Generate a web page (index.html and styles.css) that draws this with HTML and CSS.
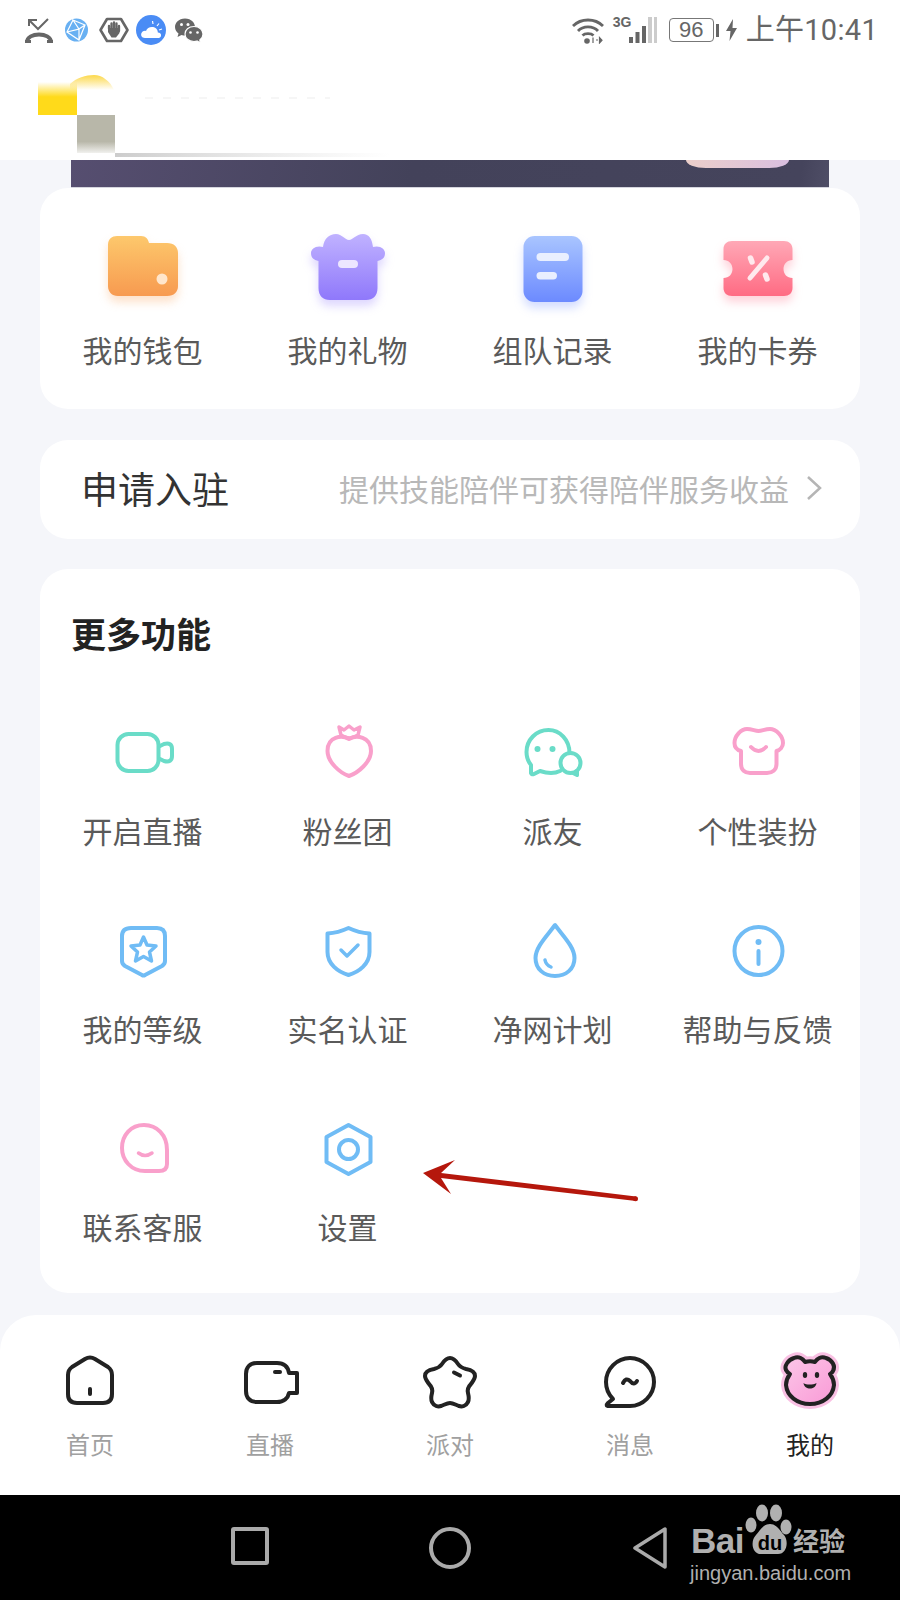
FILE: index.html
```html
<!DOCTYPE html>
<html>
    <head>
        <meta charset="utf-8">
        <meta name="viewport" content="initial-scale=1, maximum-scale=1" />
        <title>我的</title>
        <link rel="stylesheet" href="styles.css">
    </head>
    <body>
        <div class="status">
            <div class="status-left">
                <svg width="30" height="30" viewBox="0 0 30 30"><path d="M5 11V5H13M5 5L14 14L24 4" fill="none" stroke="#666" stroke-width="2"/><path d="M3 27C3 17 27 17 27 27" fill="none" stroke="#666" stroke-width="4"/><path d="M1 25H7V28H1ZM23 25H29V28H23Z" fill="#666"/></svg>
                <svg width="32" height="30" viewBox="0 0 32 30"><circle cx="16.5" cy="15" r="11.5" fill="#68b0f2"/><path d="M13 5L7 17L19 25L25 10L13 5L19 14L7 17M19 14L19 25M19 14L25 10" fill="none" stroke="#fff" stroke-width="1.2"/></svg>
                <svg width="32" height="30" viewBox="0 0 32 30"><path d="M9 4H23L29.500 15L23 26H9L2.500 15Z" fill="none" stroke="#666" stroke-width="2.600" stroke-linejoin="round"/><path d="M11 14V11M13.500 15V8.500M16 15V7.500M18.500 15V8.500M21 16V11" stroke="#666" stroke-width="2.300" stroke-linecap="round"/><path d="M10 13H21.500V18L18 22.500H13.500L10 17Z" fill="#666"/></svg>
                <svg width="30" height="30" viewBox="0 0 30 30"><circle cx="15" cy="15" r="15" fill="#4a8cf5"/><path d="M9 23C5.500 23 4.500 20 5.500 18C6.500 16 8.500 15.500 10 16C11 13 14 11.500 17 12C20 12.500 22 15 21.800 17.500C24 17.500 25.500 19 25 21C24.500 22.500 23.500 23 22 23Z" fill="#fff"/><path d="M17 9L16.500 6M21 11L23 8.500M23 15L26 14" stroke="#fff" stroke-width="1.200"/></svg>
                <svg width="34" height="30" viewBox="0 0 34 30"><path d="M13 3.500C6.500 3.500 3 8 3 12C3 15 4.500 17 6.500 18.500L5.500 22L9.500 20C11 20.500 12 20.500 13 20.500C18 20.500 23 17 23 12C23 8 19.500 3.500 13 3.500Z" fill="#666"/><path d="M22 11.500C16.500 11.500 13 15 13 19C13 23 16.500 26.500 22 26.500C23 26.500 24 26.300 25 26L28.500 28L27.800 25C30 23.500 31 21.500 31 19C31 15 27.500 11.500 22 11.500Z" fill="#666" stroke="#fff" stroke-width="1.200"/><circle cx="9.500" cy="9.500" r="1.500" fill="#fff"/><circle cx="16" cy="9.500" r="1.500" fill="#fff"/><circle cx="18.500" cy="17.500" r="1.300" fill="#fff"/><circle cx="25.500" cy="17.500" r="1.300" fill="#fff"/></svg>
            </div>
            <div class="status-right">
                <svg class="wifi" width="34" height="28" viewBox="0 0 34 28"><path d="M2 10C10 2 24 2 32 10M7 15C12 9.500 22 9.500 27 15M11.500 19.500C14 17 20 17 22.500 19.500" fill="none" stroke="#666" stroke-width="2.800"/><circle cx="16" cy="25" r="2.800" fill="#666"/><path d="M22 21.500V27M25 24H27M28.500 21.500V27L31 24.200Z" stroke="#666" stroke-width="1.200" fill="#666"/></svg>
                <div class="signal">
                    <span class="net">3G</span>
                    <svg width="32" height="28" viewBox="0 0 32 28"><rect x="1" y="21" width="4" height="6" fill="#666"/><rect x="7.500" y="16" width="4" height="11" fill="#666"/><rect x="14" y="10" width="4" height="17" fill="#666"/><rect x="20" y="1" width="4" height="26" fill="#ccc"/><rect x="26" y="1" width="3" height="26" fill="#ccc"/></svg>
                </div>
                <div class="battery">96</div>
                <div class="battery-nub"></div>
                <svg class="bolt" width="11" height="22" viewBox="0 0 11 22"><path d="M7 0L0 12H4.500L3.500 22L11 9H6.500Z" fill="#666"/></svg>
                <div class="time">上午10:41</div>
            </div>
        </div>

        <div class="header">
            <svg class="blot" width="380" height="100" viewBox="0 0 380 100">
                <defs>
                    <linearGradient id="yellowfade" x1="0" y1="0" x2="0" y2="1"><stop offset="0" stop-color="#ffda1a" stop-opacity="0"/><stop offset="0.45" stop-color="#ffda1a"/></linearGradient>
                    <linearGradient id="arcfade" x1="0" y1="0" x2="0" y2="1"><stop offset="0" stop-color="#fcd84a"/><stop offset="1" stop-color="#fcd84a" stop-opacity="0"/></linearGradient>
                    <linearGradient id="grayfade" x1="0" y1="0" x2="0" y2="1"><stop offset="0.7" stop-color="#b8b7a9"/><stop offset="1" stop-color="#b8b7a9" stop-opacity="0.2"/></linearGradient>
                    <linearGradient id="streak" x1="0" y1="0" x2="1" y2="0"><stop offset="0" stop-color="#ccc"/><stop offset="1" stop-color="#ddd" stop-opacity="0"/></linearGradient>
                </defs>
                <rect x="8" y="22" width="39" height="33" fill="url(#yellowfade)"/>
                <path d="M40 24C46 18 56 15 64 15C72 15 80 21 84 30H40Z" fill="url(#arcfade)"/>
                <rect x="47" y="55" width="38" height="38" fill="url(#grayfade)"/>
                <rect x="85" y="93" width="275" height="4" fill="url(#streak)"/>
                <path d="M115 38H300" stroke="#f3f3f3" stroke-width="1.500" stroke-dasharray="8 10"/>
            </svg>
        </div>

        <div class="banner"><div class="banner-btn"></div></div>

        <div class="card shortcuts">
            <div class="tile">
                <svg class="icon wallet" width="72" height="72" viewBox="0 0 72 72"><defs><linearGradient id="g1" gradientUnits="userSpaceOnUse" x1="0" y1="4" x2="0" y2="64"><stop offset="0" stop-color="#fdc86c"/><stop offset="1" stop-color="#f79a50"/></linearGradient></defs><path d="M10 4H34C39 4 41 7 42 11H60C67 11 71 15 71 21V54C71 60 67 64 60 64H11C5 64 1 60 1 54V13C1 7 5 4 10 4Z" fill="url(#g1)"/><circle cx="55" cy="47" r="5.500" fill="#ffe6cc"/></svg>
                <div class="label">我的钱包</div>
            </div>
            <div class="tile">
                <svg class="icon gift" width="72" height="72" viewBox="0 0 72 72"><defs><linearGradient id="g2" gradientUnits="userSpaceOnUse" x1="0" y1="2" x2="0" y2="68"><stop offset="0" stop-color="#c0b2ff"/><stop offset="1" stop-color="#8f78fb"/></linearGradient></defs><path d="M11 15C12 7 17 2 24 2C30 2 33 8 37 8C41 8 44 2 51 2C57 2 60 7 61 15C68 13 73 17 73 21C73 26 70 28 65.500 29V56C65.500 64 61 68 54 68H18C11 68 6.500 64 6.500 56V29C2 28 -1 26 -1 21C-1 17 4 13 11 15Z" fill="url(#g2)"/><rect x="26" y="28" width="20" height="8" rx="4" fill="#ece6ff"/></svg>
                <div class="label">我的礼物</div>
            </div>
            <div class="tile">
                <svg class="icon doc" width="72" height="72" viewBox="0 0 72 72"><defs><linearGradient id="g3" x1="0" y1="0" x2="0" y2="1"><stop offset="0" stop-color="#a9c5ff"/><stop offset="1" stop-color="#6c8aff"/></linearGradient></defs><rect x="6.500" y="4" width="59" height="66" rx="11" fill="url(#g3)"/><rect x="19.500" y="21" width="32.500" height="8" rx="4" fill="#e9efff"/><rect x="19.500" y="40" width="20.500" height="7.500" rx="3.700" fill="#e9efff"/></svg>
                <div class="label">组队记录</div>
            </div>
            <div class="tile">
                <svg class="icon ticket" width="72" height="72" viewBox="0 0 72 72"><defs><linearGradient id="g4" x1="0" y1="0" x2="0" y2="1"><stop offset="0" stop-color="#ffa8b6"/><stop offset="1" stop-color="#ff6b83"/></linearGradient></defs><path d="M10 9H62C67 9 70.500 12 70.500 17V28C65 28 61.500 32 61.500 37C61.500 42 65 46 70.500 46V56C70.500 61 67 64 62 64H10C5 64 1.500 61 1.500 56V46C7 46 10.500 42 10.500 37C10.500 32 7 28 1.500 28V17C1.500 12 5 9 10 9Z" fill="url(#g4)"/><path d="M28 46L45 26" stroke="#ffe9ed" stroke-width="5" stroke-linecap="round"/><path d="M28.500 26L30 30M43.500 43L45 47" stroke="#ffe9ed" stroke-width="5.500" stroke-linecap="round"/></svg>
                <div class="label">我的卡券</div>
            </div>
        </div>

        <div class="card apply">
            <div class="apply-title">申请入驻</div>
            <div class="apply-right">
                <span class="apply-text">提供技能陪伴可获得陪伴服务收益</span>
                <svg width="16" height="26" viewBox="0 0 16 26"><path d="M2 2L14 13L2 24" fill="none" stroke="#b5b5b5" stroke-width="2.500"/></svg>
            </div>
        </div>

        <div class="card more">
            <div class="more-title">更多功能</div>
            <div class="more-grid">
                <div class="tile">
                    <svg class="icon line teal" width="72" height="72" viewBox="0 0 72 72"><rect x="10.500" y="18" width="41" height="37" rx="11"/><path d="M53 30L57 28Q65 26 65 33V40Q65 47 57 45L53 43"/></svg>
                    <div class="label">开启直播</div>
                </div>
                <div class="tile">
                    <svg class="icon line pink" width="72" height="72" viewBox="0 0 72 72"><path d="M37 23C30 19 15.500 20 15.500 35C15.500 46 28 57 37 60C46 57 59 46 59 35C59 20 44 19 37 23Z"/><path class="thin" d="M27 11L32 14L37 10L42 14L48 11L46 19Q37 25 29 19Z"/></svg>
                    <div class="label">粉丝团</div>
                </div>
                <div class="tile">
                    <svg class="icon line teal" width="72" height="72" viewBox="0 0 72 72"><path d="M52.500 37C52.500 24 43 14 31.500 14C19 14 9.500 24 9.500 36C9.500 41 11.500 46 14 49L14 57Q15 59 17 58L23 55C29 57 37 58 43 55"/><circle cx="53.500" cy="47" r="10"/><path d="M56 57L60 59L60 55"/><circle class="dot" cx="20.500" cy="33" r="3"/><circle class="dot" cx="35.500" cy="33" r="3"/></svg>
                    <div class="label">派友</div>
                </div>
                <div class="tile">
                    <svg class="icon line pink" width="72" height="72" viewBox="0 0 72 72"><path d="M25 13C30 13 33 15 36.500 15C40 15 43 13 48 13C54 13 61 20 61 27C61 31 58 34 54.500 35V48C54.500 54 50 57 45 57H28C23 57 19 54 19 48V35C15 34 12.500 31 12.500 27C12.500 20 19 13 25 13Z"/><path d="M29 31Q36.500 39 44 31"/></svg>
                    <div class="label">个性装扮</div>
                </div>
                <div class="tile">
                    <svg class="icon line blue" width="72" height="72" viewBox="0 0 72 72"><path d="M24 14H50Q58 14 58 22V47Q58 50 55 52L38 61Q36.500 62 35 61L18 52Q15 50 15 47V22Q15 14 24 14Z"/><path class="thin" d="M36.500 23L40 31L49 32L42.500 38L44.500 47L36.500 42.500L28.500 47L30.500 38L24 32L33 31Z"/></svg>
                    <div class="label">我的等级</div>
                </div>
                <div class="tile">
                    <svg class="icon line blue" width="72" height="72" viewBox="0 0 72 72"><path d="M36.500 14C43 17 50 19 57.500 19.500V38C57.500 50 47 58 36.500 61C26 58 15.500 50 15.500 38V19.500C23 19 30 17 36.500 14Z"/><path class="thin" d="M29 36L35 42L46 31"/></svg>
                    <div class="label">实名认证</div>
                </div>
                <div class="tile">
                    <svg class="icon line blue" width="72" height="72" viewBox="0 0 72 72"><path d="M38 11C30 22 18.500 33 18.500 44C18.500 55 27 62 38 62C49 62 57.500 55 57.500 44C57.500 33 46 22 38 11Z"/><path class="thin" d="M28 46Q29 51 34 53"/></svg>
                    <div class="label">净网计划</div>
                </div>
                <div class="tile">
                    <svg class="icon line blue" width="72" height="72" viewBox="0 0 72 72"><circle cx="36.500" cy="37" r="24"/><circle class="dot" cx="36.500" cy="28" r="3"/><path d="M36.500 37V50"/></svg>
                    <div class="label">帮助与反馈</div>
                </div>
                <div class="tile">
                    <svg class="icon line pink" width="72" height="72" viewBox="0 0 72 72"><path d="M37 13C50 13 60 23 60 38V52C60 57 57 59 52 59H38C24 59 15 48 15 36C15 23 24 13 37 13Z"/><path class="thin" d="M31.500 41Q38 46 45 41"/></svg>
                    <div class="label">联系客服</div>
                </div>
                <div class="tile">
                    <svg class="icon line blue" width="72" height="72" viewBox="0 0 72 72"><path d="M36.500 13L58.500 25V50L36.500 62L14.500 50V25Z"/><circle cx="36.500" cy="37.500" r="9.500"/></svg>
                    <div class="label">设置</div>
                </div>
            </div>
        </div>

        <div class="tabbar">
            <div class="tab">
                <svg class="tab-icon" width="60" height="60" viewBox="0 0 60 60"><path d="M25 7Q30 4 35 7L48 15Q52 18 52 23V42Q52 51 43 51H17Q8 51 8 42V23Q8 18 12 15Z"/><path d="M30 37V42"/></svg>
                <div class="tab-label">首页</div>
            </div>
            <div class="tab">
                <svg class="tab-icon" width="60" height="60" viewBox="0 0 60 60"><path d="M17 11H37C44 11 48 15 49 21H57V41H49C48 46 44 50 37 50H17C10 50 6 46 6 39V22C6 15 10 11 17 11Z"/><path d="M35 20H40"/></svg>
                <div class="tab-label">直播</div>
            </div>
            <div class="tab">
                <svg class="tab-icon" width="60" height="60" viewBox="0 0 60 60"><path d="M30 6C34 6 36 9 38 12C40 15 42 16 46 17C52 18 55 20 55 24C55 27 53 29 51 32C48 35 47 37 48 41C49 45 49 48 48 50C46 54 42 55 39 54C36 53 33 51 30 51C27 51 24 53 21 54C18 55 14 54 12 50C11 48 11 45 12 41C13 37 12 35 9 32C7 29 5 27 5 24C5 20 8 18 14 17C18 16 20 15 22 12C24 9 26 6 30 6Z"/><path d="M34 20.500L40 23.500"/></svg>
                <div class="tab-label">派对</div>
            </div>
            <div class="tab">
                <svg class="tab-icon" width="60" height="60" viewBox="0 0 60 60"><path d="M13 47C8 42 6 36 6 30C6 17 17 6 30 6C43 6 54 17 54 30C54 43 43 54 30 54H9Q5 54 8 51Z"/><path d="M23 31Q26 25 30 29Q34 34 37 29"/></svg>
                <div class="tab-label">消息</div>
            </div>
            <div class="tab">
                <svg class="tab-icon bear" width="60" height="60" viewBox="0 0 60 60">
                    <defs><linearGradient id="g5" x1="0" y1="0" x2="1" y2="1"><stop offset="0" stop-color="#fcc6e8"/><stop offset="1" stop-color="#f99ad6"/></linearGradient></defs>
                    <path class="bear-glow" d="M14 6C19 4 23 7 25 10C28 9 32 9 35 10C37 7 41 4 46 6C52 8 56 14 53 19C52 21 50 22 50 22C53 26 54 30 54 33C53 44 43 52 30 52C17 52 7 44 6 33C6 30 7 26 10 22C8 21 7 20 6 18C4 14 8 8 14 6Z"/>
                    <path d="M14 6C19 4 23 7 25 10C28 9 32 9 35 10C37 7 41 4 46 6C52 8 56 14 53 19C52 21 50 22 50 22C53 26 54 30 54 33C53 44 43 52 30 52C17 52 7 44 6 33C6 30 7 26 10 22C8 21 7 20 6 18C4 14 8 8 14 6Z" fill="url(#g5)"/>
                    <ellipse class="bear-eye" cx="25" cy="23" rx="2.200" ry="3"/><ellipse class="bear-eye" cx="37" cy="23" rx="2.200" ry="3"/>
                    <path class="bear-eye" d="M23.500 31C26 33 33 33 36.500 31C36 35 33 36.500 30 36.500C27 36.500 24 35 23.500 31Z"/>
                </svg>
                <div class="tab-label active">我的</div>
            </div>
        </div>

        <div class="navbar">
            <div class="nav-square"></div>
            <div class="nav-circle"></div>
            <svg class="nav-back" width="34" height="42" viewBox="0 0 34 42"><path d="M32 2V40L2 21Z" fill="none" stroke="#aaa" stroke-width="3.500" stroke-linejoin="round"/></svg>
            <div class="watermark">
                <div class="wm-top">
                    <span class="wm-bai">Bai</span>
                    <svg class="wm-paw" width="48" height="52" viewBox="0 0 48 52"><ellipse cx="18" cy="9" rx="6" ry="8.500" fill="#b0b0b0"/><ellipse cx="32" cy="9" rx="6" ry="8.500" fill="#b0b0b0"/><ellipse cx="7" cy="21" rx="5.500" ry="7.500" fill="#b0b0b0"/><ellipse cx="42" cy="23" rx="5.500" ry="7.500" fill="#b0b0b0"/><path d="M26 20C33 20 36 27 40 31C45 37 43 50 34 50H17C8 50 6 37 12 31C16 27 19 20 26 20Z" fill="#b0b0b0"/><text x="26" y="46" text-anchor="middle" class="wm-du">du</text></svg>
                    <span class="wm-jy">经验</span>
                </div>
                <div class="wm-url">jingyan.baidu.com</div>
            </div>
        </div>

        <!-- red annotation arrow on top of the screenshot -->
        <svg class="arrow" width="900" height="1600" viewBox="0 0 900 1600"><path d="M423 1173L455 1160L441 1173L636 1196.500V1201L441 1178L451 1194Z" fill="#b5170c"/><circle cx="635.500" cy="1198.700" r="2.500" fill="#b5170c"/></svg>
    </body>
</html>
```

FILE: styles.css
```css
body {
    margin: 0px;
    width: 900px;
    height: 1600px;
    overflow: hidden;
    position: relative;
    background: #f5f6fa;
    font-family: "Noto Sans CJK SC", sans-serif;
}
.status {
    height: 60px;
    background: white;
    display: flex;
    justify-content: space-between;
    align-items: center;
    padding: 0 22px 0 24px;
    box-sizing: border-box;
}
.status-left {
    display: flex;
    gap: 6px;
}
.status-right {
    display: flex;
    align-items: center;
}
.wifi {
    margin-right: 8px;
}
.signal {
    display: flex;
    align-items: flex-start;
    height: 28px;
    margin-right: 9px;
}
.net {
    font: bold 14px "Liberation Sans Narrow", "Liberation Sans", sans-serif;
    line-height: 13px;
    color: #666;
    width: 15px;
}
.battery {
    width: 45px;
    height: 24px;
    box-sizing: border-box;
    border: 1.5px solid #777;
    border-radius: 4px;
    color: #666;
    font: 22px/21px "Liberation Sans", sans-serif;
    text-align: center;
}
.battery-nub {
    width: 3px;
    height: 13px;
    background: #666;
    margin: 0 7px 0 2px;
}
.bolt {
    margin-right: 9px;
}
.time {
    color: #666;
    font-family: Roboto, "Noto Sans CJK SC", sans-serif;
    font-size: 29px;
    line-height: 40px;
    letter-spacing: 0.3px;
}
.header {
    height: 100px;
    background: white;
    position: relative;
}
.blot {
    position: absolute;
    left: 30px;
    top: 0px;
}
.banner {
    height: 28px;
    margin: 0 71px;
    background: linear-gradient(100deg, #564e70, #43425a 45%, #45445c 96%, #4f4e66);
    border-bottom: 1px solid #d5d5de;
    box-sizing: border-box;
    display: flex;
    justify-content: flex-end;
}
.banner-btn {
    width: 103px;
    height: 8px;
    margin-right: 40px;
    background: linear-gradient(to right, #eccfca, #d9bfe0);
    border-radius: 0 0 20px 20px / 0 0 8px 8px;
}
.card {
    background: white;
    margin: 0 40px;
    border-radius: 28px;
}
.shortcuts {
    display: grid;
    grid-template-columns: repeat(4, 1fr);
    padding: 44px 0 40px 0;
}
.tile {
    display: flex;
    flex-direction: column;
    align-items: center;
}
.icon {
    display: block;
    overflow: visible;
}
.label {
    margin-top: 25px;
    font-size: 30px;
    line-height: 40px;
    color: #5a5a5a;
    white-space: nowrap;
}
.more-grid .label {
    margin-top: 22px;
}
.wallet {
    filter: drop-shadow(0px 6px 5px rgba(247, 154, 80, 0.3));
}
.gift {
    filter: drop-shadow(0px 6px 5px rgba(143, 120, 251, 0.3));
}
.doc {
    filter: drop-shadow(0px 6px 5px rgba(108, 138, 255, 0.3));
}
.ticket {
    filter: drop-shadow(0px 6px 5px rgba(255, 107, 131, 0.3));
}
.apply {
    margin-top: 31px;
    height: 99px;
    box-sizing: border-box;
    display: flex;
    justify-content: space-between;
    align-items: center;
    padding: 0 38px 3px 41px;
}
.apply-title {
    font-size: 37px;
    color: #333;
}
.apply-right {
    display: flex;
    align-items: center;
    gap: 17px;
}
.apply-text {
    font-size: 30px;
    color: #b8b8b8;
}
.more {
    margin-top: 30px;
    height: 724px;
    box-sizing: border-box;
    padding-top: 42px;
}
.more-title {
    font-size: 35px;
    font-weight: bold;
    line-height: 44px;
    color: #222;
    margin-left: 31px;
}
.more-grid {
    margin-top: 61px;
    display: grid;
    grid-template-columns: repeat(4, 1fr);
    row-gap: 64px;
}
.line {
    fill: none;
    stroke-width: 4;
    stroke-linejoin: round;
    stroke-linecap: round;
}
.line .thin {
    stroke-width: 3.5;
}
.teal {
    stroke: #6adcc8;
}
.pink {
    stroke: #f9a0cb;
}
.blue {
    stroke: #70bcf5;
}
.teal .dot {
    fill: #6adcc8;
    stroke: none;
}
.blue .dot {
    fill: #70bcf5;
    stroke: none;
}
.tabbar {
    margin-top: 22px;
    height: 180px;
    background: white;
    border-radius: 36px 36px 0 0;
    display: grid;
    grid-template-columns: repeat(5, 1fr);
    padding-top: 37px;
    box-sizing: border-box;
}
.tab {
    display: flex;
    flex-direction: column;
    align-items: center;
}
.tab-icon {
    fill: none;
    stroke: #222;
    stroke-width: 4;
    stroke-linejoin: round;
    stroke-linecap: round;
}
.tab-label {
    margin-top: 16px;
    font-size: 24px;
    line-height: 32px;
    color: #a0a0a0;
}
.tab-label.active {
    color: #222;
}
.tab-icon .bear-glow {
    stroke: #f9c0e3;
    stroke-width: 10;
    fill: #f9c0e3;
}
.tab-icon .bear-eye {
    fill: #222;
    stroke: none;
}
.navbar {
    height: 105px;
    background: black;
    position: relative;
    display: flex;
    align-items: flex-start;
    padding: 32px 0 0 231px;
    box-sizing: border-box;
}
.nav-square {
    width: 38px;
    height: 38px;
    box-sizing: border-box;
    border: 4px solid #aaa;
    border-radius: 3px;
    margin-right: 160px;
}
.nav-circle {
    width: 42px;
    height: 42px;
    box-sizing: border-box;
    border: 4px solid #aaa;
    border-radius: 50%;
    margin-right: 162px;
}
.watermark {
    position: absolute;
    left: 691px;
    top: 9px;
    color: #b0b0b0;
}
.wm-top {
    display: flex;
    align-items: flex-end;
    height: 52px;
}
.wm-bai {
    font: bold 35px/36px "Liberation Sans", sans-serif;
    letter-spacing: -0.5px;
    margin-bottom: -3px;
}
.wm-paw {
    display: block;
    margin-right: 1px;
}
.wm-du {
    font: bold 20px "Liberation Sans", sans-serif;
    fill: black;
}
.wm-jy {
    font-size: 26px;
    font-weight: bold;
    line-height: 34px;
    margin-bottom: -1px;
}
.wm-url {
    font: 20px/24px "Liberation Sans", sans-serif;
    margin: 5px 0 0 -1px;
    white-space: nowrap;
}
.arrow {
    position: absolute;
    left: 0px;
    top: 0px;
    pointer-events: none;
}
```
